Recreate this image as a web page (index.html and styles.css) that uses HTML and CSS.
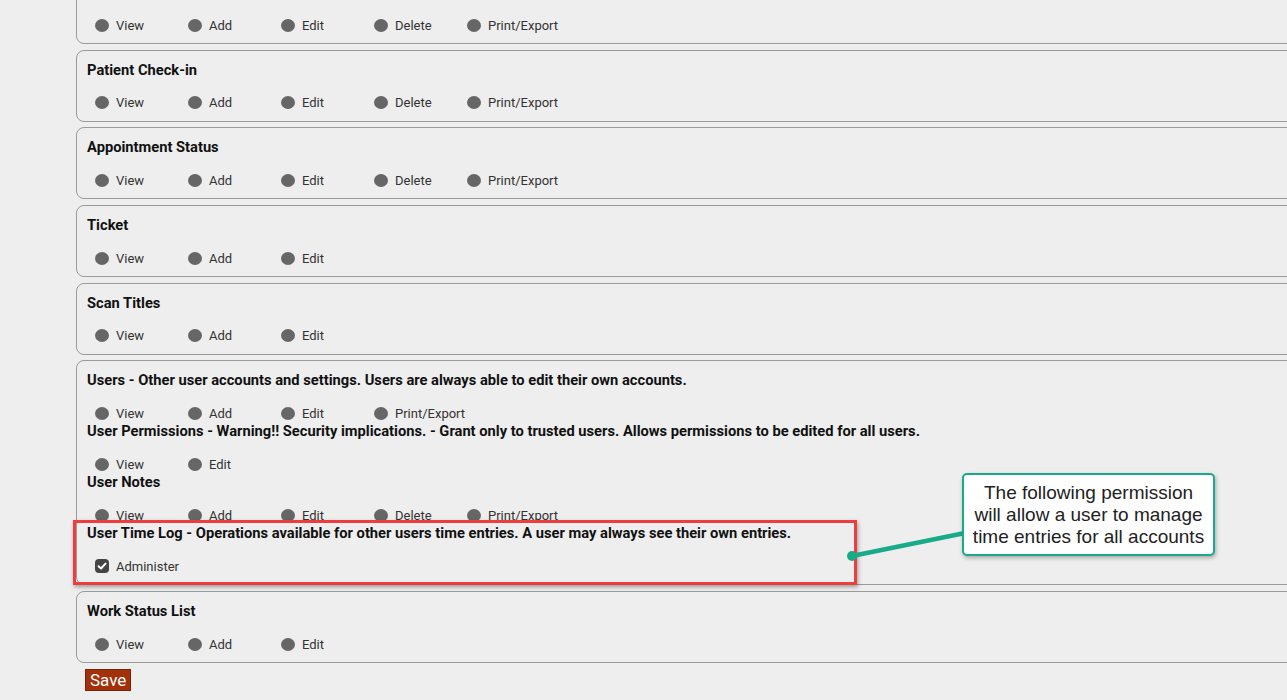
FILE: index.html
```html
<!DOCTYPE html>
<html lang="en">
<head>
    <meta charset="UTF-8">
    <meta name="viewport" content="width=device-width, initial-scale=1.0">
    <title>User Permissions</title>
    <link rel="stylesheet" href="styles.css">
</head>
<body>
    <div class="perms">
        <div class="card">
            <div class="title">&nbsp;</div>
            <div class="row">
                <label class="opt"><span class="box"></span>View</label>
                <label class="opt"><span class="box"></span>Add</label>
                <label class="opt"><span class="box"></span>Edit</label>
                <label class="opt"><span class="box"></span>Delete</label>
                <label class="opt"><span class="box"></span>Print/Export</label>
            </div>
        </div>

        <div class="card">
            <div class="title">Patient Check-in</div>
            <div class="row">
                <label class="opt"><span class="box"></span>View</label>
                <label class="opt"><span class="box"></span>Add</label>
                <label class="opt"><span class="box"></span>Edit</label>
                <label class="opt"><span class="box"></span>Delete</label>
                <label class="opt"><span class="box"></span>Print/Export</label>
            </div>
        </div>

        <div class="card">
            <div class="title">Appointment Status</div>
            <div class="row">
                <label class="opt"><span class="box"></span>View</label>
                <label class="opt"><span class="box"></span>Add</label>
                <label class="opt"><span class="box"></span>Edit</label>
                <label class="opt"><span class="box"></span>Delete</label>
                <label class="opt"><span class="box"></span>Print/Export</label>
            </div>
        </div>

        <div class="card">
            <div class="title">Ticket</div>
            <div class="row">
                <label class="opt"><span class="box"></span>View</label>
                <label class="opt"><span class="box"></span>Add</label>
                <label class="opt"><span class="box"></span>Edit</label>
            </div>
        </div>

        <div class="card">
            <div class="title">Scan Titles</div>
            <div class="row">
                <label class="opt"><span class="box"></span>View</label>
                <label class="opt"><span class="box"></span>Add</label>
                <label class="opt"><span class="box"></span>Edit</label>
            </div>
        </div>

        <div class="card">
            <div class="title">Users - Other user accounts and settings. Users are always able to edit their own accounts.</div>
            <div class="row">
                <label class="opt"><span class="box"></span>View</label>
                <label class="opt"><span class="box"></span>Add</label>
                <label class="opt"><span class="box"></span>Edit</label>
                <label class="opt"><span class="box"></span>Print/Export</label>
            </div>
            <div class="title">User Permissions - Warning!! Security implications. - Grant only to trusted users. Allows permissions to be edited for all users.</div>
            <div class="row">
                <label class="opt"><span class="box"></span>View</label>
                <label class="opt"><span class="box"></span>Edit</label>
            </div>
            <div class="title">User Notes</div>
            <div class="row">
                <label class="opt"><span class="box"></span>View</label>
                <label class="opt"><span class="box"></span>Add</label>
                <label class="opt"><span class="box"></span>Edit</label>
                <label class="opt"><span class="box"></span>Delete</label>
                <label class="opt"><span class="box"></span>Print/Export</label>
            </div>
            <!-- highlighted section -->
            <div class="marked">
                <div class="title">User Time Log - Operations available for other users time entries. A user may always see their own entries.</div>
                <div class="row">
                    <label class="opt"><span class="box checked"><svg viewBox="0 0 14 14" width="14" height="14"><path d="M3.6 7.2 L6 9.5 L10.5 4.6" fill="none" stroke="#fff" stroke-width="2" stroke-linecap="round" stroke-linejoin="round"/></svg></span>Administer</label>
                </div>
                <div class="highlight"></div>
            </div>
        </div>

        <div class="card">
            <div class="title">Work Status List</div>
            <div class="row">
                <label class="opt"><span class="box"></span>View</label>
                <label class="opt"><span class="box"></span>Add</label>
                <label class="opt"><span class="box"></span>Edit</label>
            </div>
        </div>

        <button class="save">Save</button>
    </div>

    <!-- annotation -->
    <svg class="connector" width="140" height="50" viewBox="0 0 140 50">
        <line x1="12" y1="36" x2="125" y2="13" stroke="#17ab8a" stroke-width="4.5"/>
        <circle cx="12" cy="36" r="5" fill="#17ab8a"/>
    </svg>
    <div class="callout">The following permission will allow a user to manage time entries for all accounts</div>
</body>
</html>
```

FILE: styles.css
```css
html, body {
    overflow: hidden;
}
body {
    margin: 0;
    background-color: #eeeeee;
    font-family: Roboto, "Liberation Sans", Arial, sans-serif;
    color: #333;
    position: relative;
    height: 700px;
}
.perms {
    margin: -28px 0 0 76px;
    width: 1240px;
}
.card {
    border: 1px solid #9a9a9a;
    border-radius: 8px;
    padding: 10px 10px 9px;
    margin-bottom: 5.7px;
}
.title {
    font-size: 14.7px;
    font-weight: bold;
    line-height: 18px;
    color: #111;
    white-space: nowrap;
}
.row {
    display: flex;
    margin-top: 15px;
    padding-left: 8px;
    height: 18px;
    align-items: center;
}
.opt {
    display: flex;
    align-items: center;
    gap: 7px;
    width: 93px;
    font-size: 13px;
    color: #333;
    white-space: nowrap;
}
.box {
    width: 14px;
    height: 13px;
    border-radius: 50%;
    background: #666;
    flex: none;
}
.box.checked {
    width: 14px;
    height: 14px;
    border-radius: 4px;
    background: #444;
    display: flex;
}
.marked {
    position: relative;
}
.highlight {
    position: absolute;
    left: -14px;
    top: -4px;
    width: 778px;
    height: 59px;
    border: 3px solid #ee3d3d;
    box-shadow: 1px 2px 4px rgba(0, 0, 0, 0.35);
}
.save {
    margin: 0 0 0 9px;
    padding: 0 4px;
    height: 22px;
    background: #a2300a;
    border: 1px solid #7c2205;
    color: #fff;
    font-family: Roboto, "Liberation Sans", Arial, sans-serif;
    font-size: 17px;
    line-height: 20px;
}
.connector {
    position: absolute;
    left: 840px;
    top: 520px;
}
.callout {
    position: absolute;
    left: 962px;
    top: 473px;
    width: 235px;
    height: 79px;
    padding: 0 7px;
    background: #fff;
    border: 2px solid #1aa98a;
    border-radius: 5px;
    box-shadow: 1px 2px 4px rgba(0, 0, 0, 0.3);
    font-family: "Liberation Sans", Arial, sans-serif;
    font-size: 19px;
    line-height: 22px;
    color: #222;
    text-align: center;
    display: flex;
    align-items: center;
    justify-content: center;
}
```
